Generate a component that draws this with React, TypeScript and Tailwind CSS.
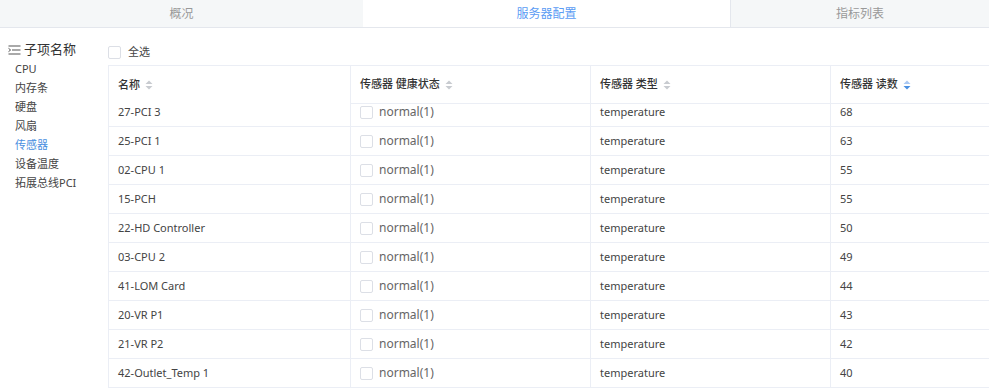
import React from "react";

const rows = [
  ["27-PCI 3", "68"],
  ["25-PCI 1", "63"],
  ["02-CPU 1", "55"],
  ["15-PCH", "55"],
  ["22-HD Controller", "50"],
  ["03-CPU 2", "49"],
  ["41-LOM Card", "44"],
  ["20-VR P1", "43"],
  ["21-VR P2", "42"],
  ["42-Outlet_Temp 1", "40"],
];

const items = ["CPU", "内存条", "硬盘", "风扇", "传感器", "设备温度", "拓展总线PCI"];

function Sort({ active }: { active?: boolean }) {
  return (
    <svg width="8" height="10" viewBox="0 0 8 10" className="ml-[5px] inline-block">
      <path d="M4 0.5 L7.5 4 L0.5 4 Z" fill={active ? "#a9c8f3" : "#c8cbd0"} />
      <path d="M4 9.5 L7.5 6 L0.5 6 Z" fill={active ? "#4a90e2" : "#c8cbd0"} />
    </svg>
  );
}

function Box() {
  return <span className="inline-block w-[13px] h-[13px] border border-[#dcdfe6] rounded-[2px] bg-white" />;
}

export default function App() {
  return (
    <div
      className="w-[989px] h-[388px] overflow-hidden bg-white text-[#333]"
      style={{ fontFamily: '"Noto Sans", "Noto Sans CJK SC", sans-serif' }}
    >
      <div className="flex h-[28px] border-b border-[#e4e7ed] text-[12px]">
        <div className="w-[363px] bg-[#f5f7f8] text-[#999] flex items-center justify-center">概况</div>
        <div className="w-[368px] bg-white text-[#5b9cf4] flex items-center justify-center border-r border-[#e4e7ed]">服务器配置</div>
        <div className="flex-1 bg-[#f5f7f8] text-[#999] flex items-center justify-center">指标列表</div>
      </div>
      <div className="flex">
        <div className="w-[108px] shrink-0 pl-[8px] pt-[13px]">
          <div className="flex items-center text-[13px] text-[#333] h-[18px]">
            <svg width="13" height="10" viewBox="0 0 13 10" className="mr-[3px]">
              <path d="M0.5 1 H12.5 M4 5 H12.5 M0.5 9 H12.5" stroke="#555" strokeWidth="1.2" />
              <path d="M0.5 3.3 L2.6 5 L0.5 6.7" stroke="#555" strokeWidth="1" fill="none" />
            </svg>
            子项名称
          </div>
          <div className="pl-[7px] text-[11px]">
            {items.map((t) => (
              <div key={t} className={`h-[19px] leading-[19px] ${t === "传感器" ? "text-[#4a8fe0]" : "text-[#444]"}`}>
                {t}
              </div>
            ))}
          </div>
        </div>
        <div className="flex-1 min-w-0">
          <div className="flex items-center h-[37px] pt-[12px] pb-[1px] text-[11px] text-[#444]">
            <Box />
            <span className="ml-[7px]">全选</span>
          </div>
          <div className="border-t border-l border-[#ebeef5] w-[900px]">
            <div className="flex h-[38px] text-[11px] text-[#333] font-medium">
              <div className="w-[242px] shrink-0 flex items-center pl-[9px] border-r border-[#ebeef5]">
                名称<Sort />
              </div>
              <div className="w-[240px] shrink-0 flex items-center pl-[9px] border-r border-b border-[#ebeef5]">
                传感器 健康状态<Sort />
              </div>
              <div className="w-[240px] shrink-0 flex items-center pl-[9px] border-r border-b border-[#ebeef5]">
                传感器 类型<Sort />
              </div>
              <div className="flex-1 flex items-center pl-[9px] border-b border-[#ebeef5]">
                传感器 读数<Sort active />
              </div>
            </div>
            <div className="h-[290px] overflow-hidden">
              <div className="-mt-[6px]">
                {rows.map(([name, val]) => (
                  <div key={name} className="flex h-[29px] text-[11px] text-[#444]">
                    <div className="w-[242px] shrink-0 flex items-center pl-[9px] border-r border-b border-[#ebeef5]">
                      {name}
                    </div>
                    <div className="w-[240px] shrink-0 flex items-center pl-[9px] border-r border-b border-[#ebeef5] text-[12px] text-[#666]">
                      <Box />
                      <span className="ml-[6px]">normal(1)</span>
                    </div>
                    <div className="w-[240px] shrink-0 flex items-center pl-[9px] border-r border-b border-[#ebeef5]">
                      temperature
                    </div>
                    <div className="flex-1 flex items-center pl-[9px] border-b border-[#ebeef5]">{val}</div>
                  </div>
                ))}
              </div>
            </div>
          </div>
        </div>
      </div>
    </div>
  );
}
